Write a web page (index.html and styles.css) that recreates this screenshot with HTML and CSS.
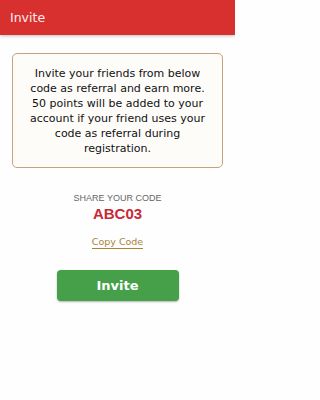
FILE: index.html
```html
<!DOCTYPE html>
<html>
<head>
<meta charset="utf-8">
<link rel="stylesheet" href="styles.css">
</head>
<body>
<header class="appbar"><span class="title">Invite</span></header>
<main class="content">
  <div class="info-box">
    <p class="info-text">Invite your friends from below code as referral and earn more. 50 points will be added to your account if your friend uses your code as referral during registration.</p>
  </div>
  <div class="share">
    <div class="share-label">SHARE YOUR CODE</div>
    <div class="share-code">ABC03</div>
    <a class="copy-link">Copy Code</a>
  </div>
  <button class="invite-btn">Invite</button>
</main>
</body>
</html>
```
FILE: styles.css
```css
html, body {
  margin: 0;
  padding: 0;
  background: #fefefe;
}
body {
  width: 235px;
  height: 400px;
  font-family: "DejaVu Sans", sans-serif;
}
.appbar {
  height: 35px;
  background: #d8302f;
  display: flex;
  align-items: center;
  padding-left: 10px;
  box-shadow: 0 1px 3px rgba(0,0,0,0.25);
}
.title {
  color: #fbeeee;
  font-size: 12.5px;
}
.content {
  display: flex;
  flex-direction: column;
  align-items: center;
  padding: 18px 12px 0;
}
.info-box {
  width: 100%;
  box-sizing: border-box;
  height: 115px;
  border: 1.5px solid #c4a27c;
  border-radius: 5px;
  background: #fdfcf9;
  display: flex;
  align-items: center;
  justify-content: center;
  padding: 0 12px;
}
.info-text {
  margin: 0;
  text-align: center;
  font-size: 11px;
  line-height: 15px;
  color: #111;
}
.share {
  margin-top: 25px;
  display: flex;
  flex-direction: column;
  align-items: center;
}
.share-label {
  font-family: "Liberation Sans", sans-serif;
  font-size: 9px;
  color: #666;
}
.share-code {
  font-family: "Liberation Sans", sans-serif;
  font-weight: bold;
  font-size: 15px;
  color: #c62a36;
  margin-top: 2px;
}
.copy-link {
  margin-top: 14px;
  font-size: 9.5px;
  color: #a88437;
  border-bottom: 1px solid #a88437;
  padding-bottom: 1px;
}
.invite-btn {
  margin-top: 21px;
  width: 122px;
  height: 31px;
  border: none;
  border-radius: 4px;
  background: #46a04a;
  color: #fff;
  font-family: "DejaVu Sans", sans-serif;
  font-weight: bold;
  font-size: 13px;
  box-shadow: 0 1px 2px rgba(0,0,0,0.3);
}
```
